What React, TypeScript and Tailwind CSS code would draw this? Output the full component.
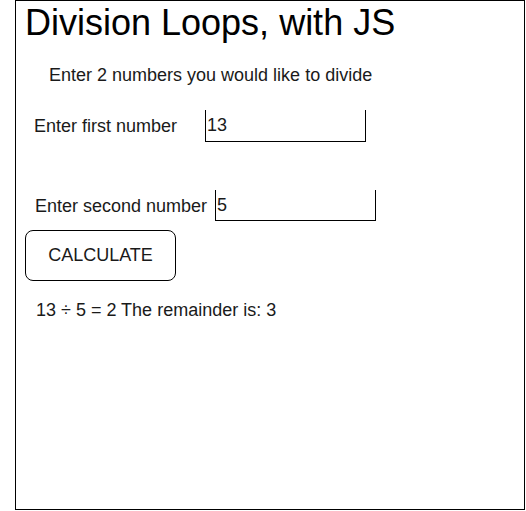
export default function App() {
  return (
    <div className="min-h-[511px] bg-white font-['Liberation_Sans',Arial,sans-serif] text-[#1a1a1a]">
      <div className="ml-[15px] h-[510px] w-[510px] border border-black">
        <h1 className="mt-[2px] pl-[9px] text-[36px] leading-[40px] font-normal text-black">
          Division Loops, with JS
        </h1>

        <p className="mt-[22px] pl-[33px] text-[18px] leading-[20px]">
          Enter 2 numbers you would like to divide
        </p>

        {/* first number row */}
        <div className="mt-[25px] flex items-center">
          <label className="w-[189px] pl-[18px] text-[18px] leading-[20px]">
            Enter first number
          </label>
          <input
            type="text"
            defaultValue="13"
            className="h-[32px] w-[161px] border-x border-b border-black px-[1px] text-[18px] outline-none"
          />
        </div>

        {/* second number row */}
        <div className="mt-[48px] flex items-center">
          <label className="w-[199px] pl-[19px] text-[18px] leading-[20px]">
            Enter second number
          </label>
          <input
            type="text"
            defaultValue="5"
            className="h-[31px] w-[161px] border-x border-b border-black px-[1px] text-[18px] outline-none"
          />
        </div>

        <button className="mt-[9px] ml-[9px] h-[51px] w-[151px] rounded-lg border border-black bg-white text-[18px]">
          CALCULATE
        </button>

        <p className="mt-[19px] pl-[20px] text-[18px] leading-[20px]">
          13 ÷ 5 = 2 The remainder is: 3
        </p>
      </div>
    </div>
  );
}
